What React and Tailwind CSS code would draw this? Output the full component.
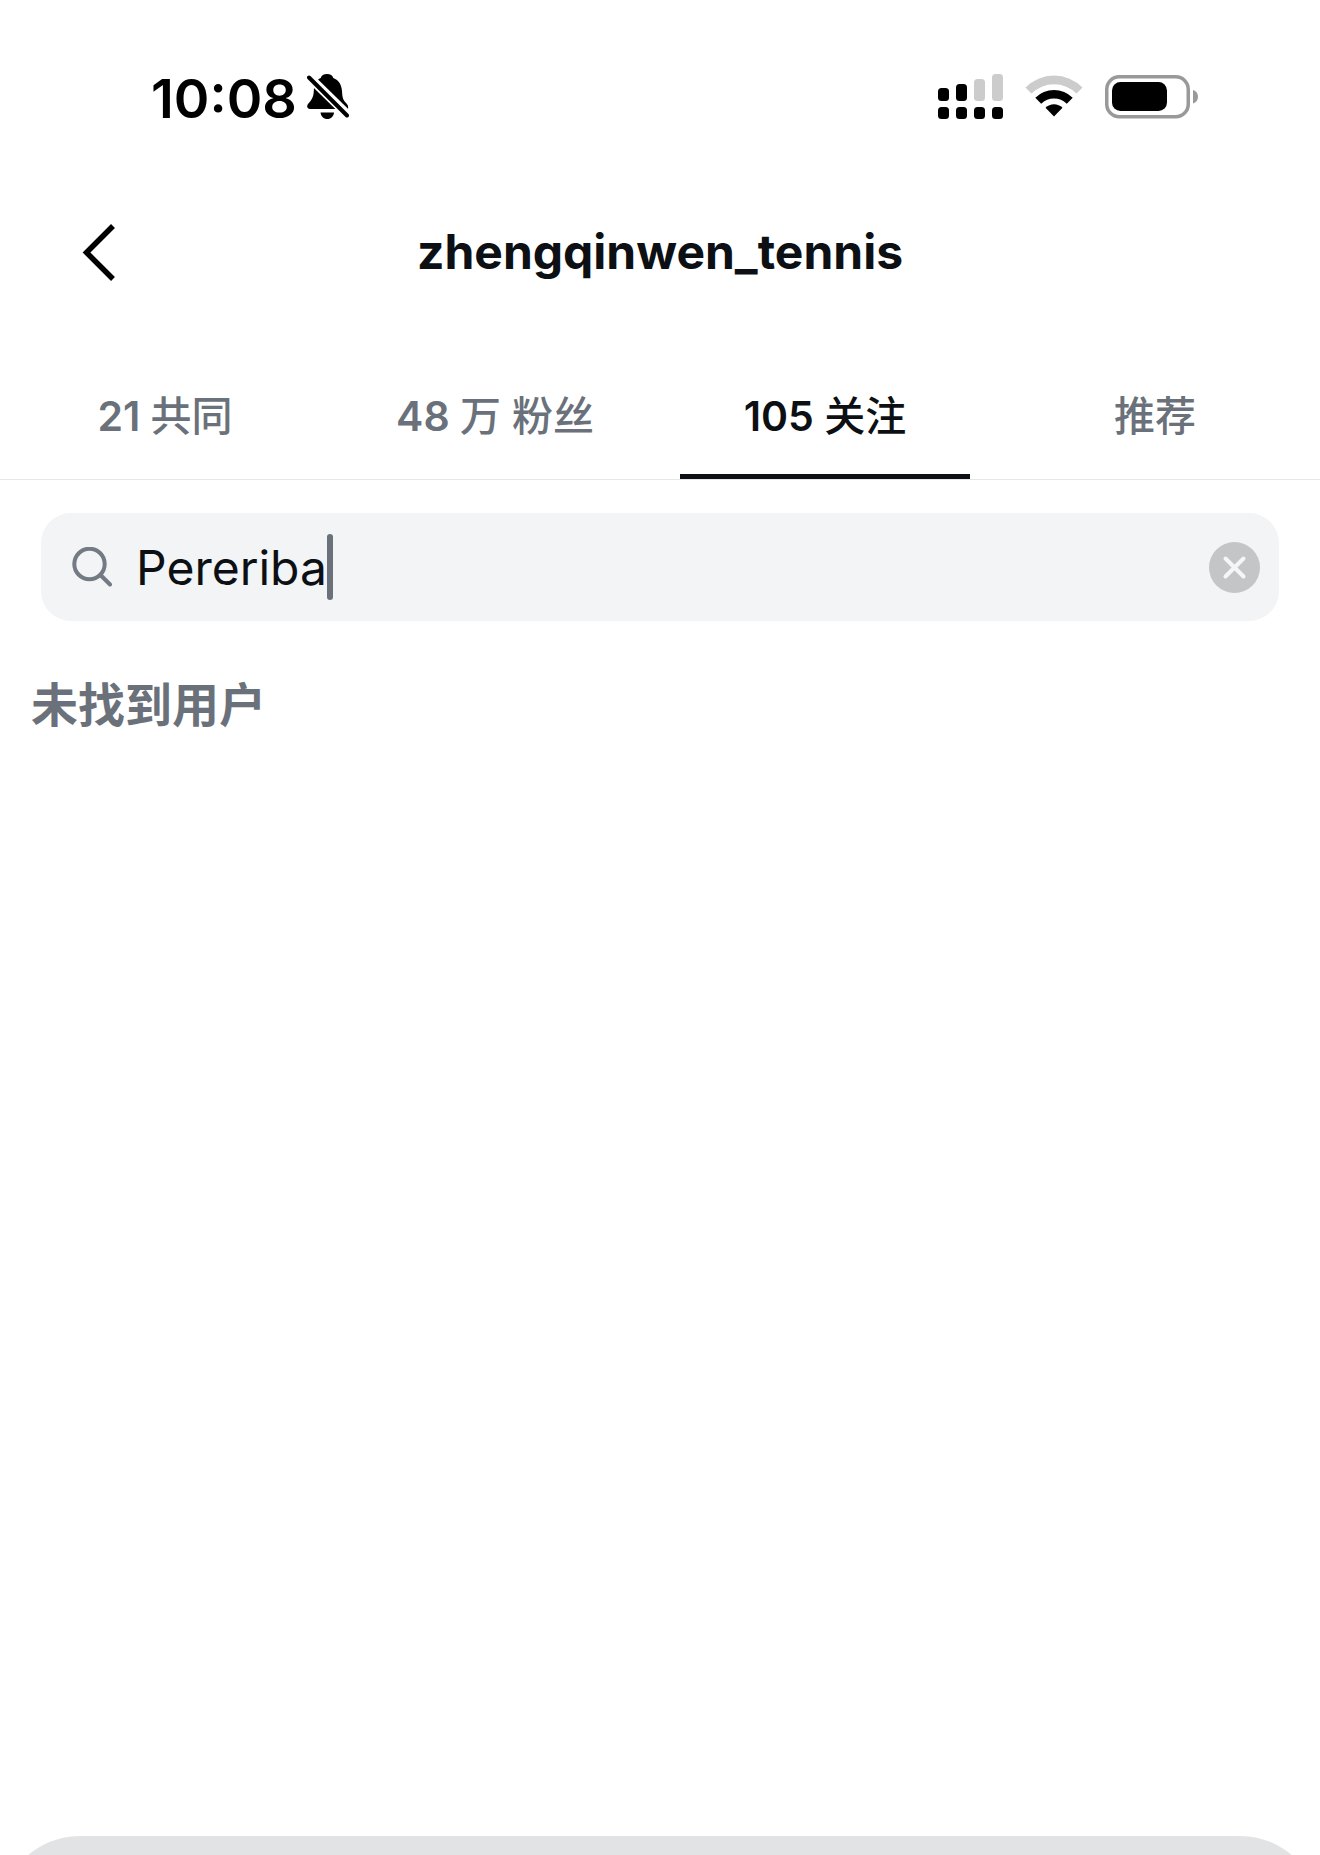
import { useState } from "react";

const TABS = [
  { id: "mutual", count: "21", name: "共同" },
  { id: "followers", count: "48", name: "万 粉丝" },
  { id: "following", count: "105", name: "关注" },
  { id: "suggested", name: "推荐" },
];

function BellOffIcon() {
  return (
    <svg width="42" height="46" viewBox="0 0 42 46" aria-hidden="true">
      <path
        d="M20 0c3.500 0 5.500 1.500 6.300 4C32 6 34.500 11 35 17c.3 6 1 9 4 12 1.700 1.700 2.500 3 2 6H3c-3 0-3.600-3-2-5 3-3.500 5.500-6 5.800-13C7 10 9 6 13.700 4 14.500 1.500 16.500 0 20 0z"
        fill="#000"
      />
      <path d="M13.500 38.500h13.500c-.5 4-3 6.500-6.700 6.500s-6.300-2.500-6.800-6.500z" fill="#000" />
      <path d="M-1 0 44 44" stroke="#fff" strokeWidth="9" />
      <path d="M2 3.500 40 41.500" stroke="#000" strokeWidth="4" strokeLinecap="round" />
    </svg>
  );
}

function SignalIcon() {
  return (
    <svg width="65" height="46" viewBox="0 0 65 46" aria-hidden="true">
      <g fill="#000">
        <rect x="0" y="14" width="11" height="13" rx="3.500" />
        <rect x="18" y="10" width="11" height="17" rx="3.500" />
        <rect x="0" y="33" width="11" height="12" rx="3.500" />
        <rect x="18" y="33" width="11" height="12" rx="3.500" />
        <rect x="36" y="33" width="11" height="12" rx="3.500" />
        <rect x="54" y="33" width="11" height="12" rx="3.500" />
      </g>
      <g fill="#ccc">
        <rect x="36" y="5" width="11" height="22" rx="3.500" />
        <rect x="54" y="0" width="11" height="27" rx="3.500" />
      </g>
    </svg>
  );
}

function WifiIcon() {
  return (
    <svg width="58" height="44" viewBox="0 0 58 44" aria-hidden="true">
      <path d="M0.500 12.500a40 40 0 0 1 57 0l-6 6a32 32 0 0 0-45 0z" fill="#ccc" />
      <path d="M10.300 22.700a26.500 26.500 0 0 1 37.400 0l-5.900 6a18.200 18.200 0 0 0-25.600 0z" fill="#000" />
      <path d="M20.500 32.700a12 12 0 0 1 17 0L29 41.500z" fill="#000" />
    </svg>
  );
}

function BatteryIcon() {
  return (
    <svg width="94" height="44" viewBox="0 0 94 44" aria-hidden="true">
      <rect x="1.750" y="1.750" width="81.500" height="40" rx="12.500" fill="none" stroke="#999" strokeWidth="3.500" />
      <rect x="7" y="7" width="55" height="29" rx="8.500" fill="#000" />
      <path d="M88 15c3.300 1 5 3.500 5 6.700s-1.700 5.800-5 6.800z" fill="#999" />
    </svg>
  );
}

function StatusBar() {
  return (
    <div className="flex items-center justify-between pt-[67px] pr-[121px] pl-[151px]">
      <div className="flex items-center gap-[10px]">
        <span className="pt-1 text-[54px] leading-14 font-semibold text-black">10:08</span>
        <BellOffIcon />
      </div>
      <div className="flex items-center gap-[22px]">
        <SignalIcon />
        <WifiIcon />
        <BatteryIcon />
      </div>
    </div>
  );
}

function Header() {
  return (
    <header className="grid grid-cols-[1fr_auto_1fr] items-center px-20 pt-[93px]">
      <button type="button" aria-label="返回" className="justify-self-start">
        <svg width="36" height="64" viewBox="0 0 36 64" aria-hidden="true">
          <path d="M33 6 6.500 32.500 33 59" fill="none" stroke="#000" strokeWidth="5.500" />
        </svg>
      </button>
      <h1 className="text-[48px] leading-16 font-bold">zhengqinwen_tennis</h1>
    </header>
  );
}

function Tabs({ active, onChange }) {
  return (
    <div role="tablist" className="mt-[72px] grid grid-cols-4 border-b border-[#e6e7e9]">
      {TABS.map((tab) => (
        <button
          key={tab.id}
          type="button"
          role="tab"
          aria-selected={tab.id === active}
          onClick={() => onChange(tab.id)}
          className={`mx-5 border-b-[5px] pt-8 pb-[30px] text-[41px] leading-14 font-medium whitespace-nowrap ${
            tab.id === active ? "border-[#0c1014] text-[#0c1014]" : "border-transparent text-[#6a717a]"
          }`}
        >
          {tab.count && <span className="font-semibold">{tab.count} </span>}
          {tab.name}
        </button>
      ))}
    </div>
  );
}

function SearchBox({ value, onChange }) {
  return (
    <div className="mx-[41px] mt-[33px] flex h-[108px] items-center rounded-[30px] bg-[#f2f4f6] pr-[19px] pl-[31px]">
      <label htmlFor="user-search" aria-label="搜索">
        <svg width="40" height="40" viewBox="0 0 40 40" fill="none" stroke="#737a83" strokeWidth="4" aria-hidden="true">
          <circle cx="17.500" cy="17" r="15.200" />
          <path d="m28.500 28 9.500 9.500" strokeLinecap="round" />
        </svg>
      </label>
      <input
        id="user-search"
        type="text"
        value={value}
        onChange={(e) => onChange(e.target.value)}
        className="ml-6 field-sizing-content min-w-0 bg-transparent pt-0.5 text-[48px] leading-16 caret-transparent outline-none"
      />
      <span className="h-[66px] w-[6px] rounded-sm bg-[#6a717a]" />
      <button type="button" aria-label="清除" onClick={() => onChange("")} className="ml-auto">
        <svg width="51" height="51" viewBox="0 0 51 51" aria-hidden="true">
          <circle cx="25.500" cy="25.500" r="25.500" fill="#c3c5c7" />
          <path d="m16.500 16.500 18 18m0-18-18 18" stroke="#f5f6f7" strokeWidth="4" strokeLinecap="round" />
        </svg>
      </button>
    </div>
  );
}

export default function App() {
  const [tab, setTab] = useState("following");
  const [query, setQuery] = useState("Pereriba");

  return (
    <div className="flex min-h-screen flex-col bg-white font-[Inter,'Noto_Sans_CJK_SC',sans-serif] text-[#0c1014]">
      <StatusBar />
      <Header />
      <Tabs active={tab} onChange={setTab} />
      <main className="flex-1">
        <SearchBox value={query} onChange={setQuery} />
        <p className="mt-[50px] px-[31px] text-[47px] leading-[68px] font-bold text-[#6a717a]">未找到用户</p>
      </main>
      {/* top edge of the keyboard */}
      <div className="h-[19px] overflow-hidden">
        <div className="h-40 rounded-t-[80px] bg-[#e2e3e5]" />
      </div>
    </div>
  );
}
